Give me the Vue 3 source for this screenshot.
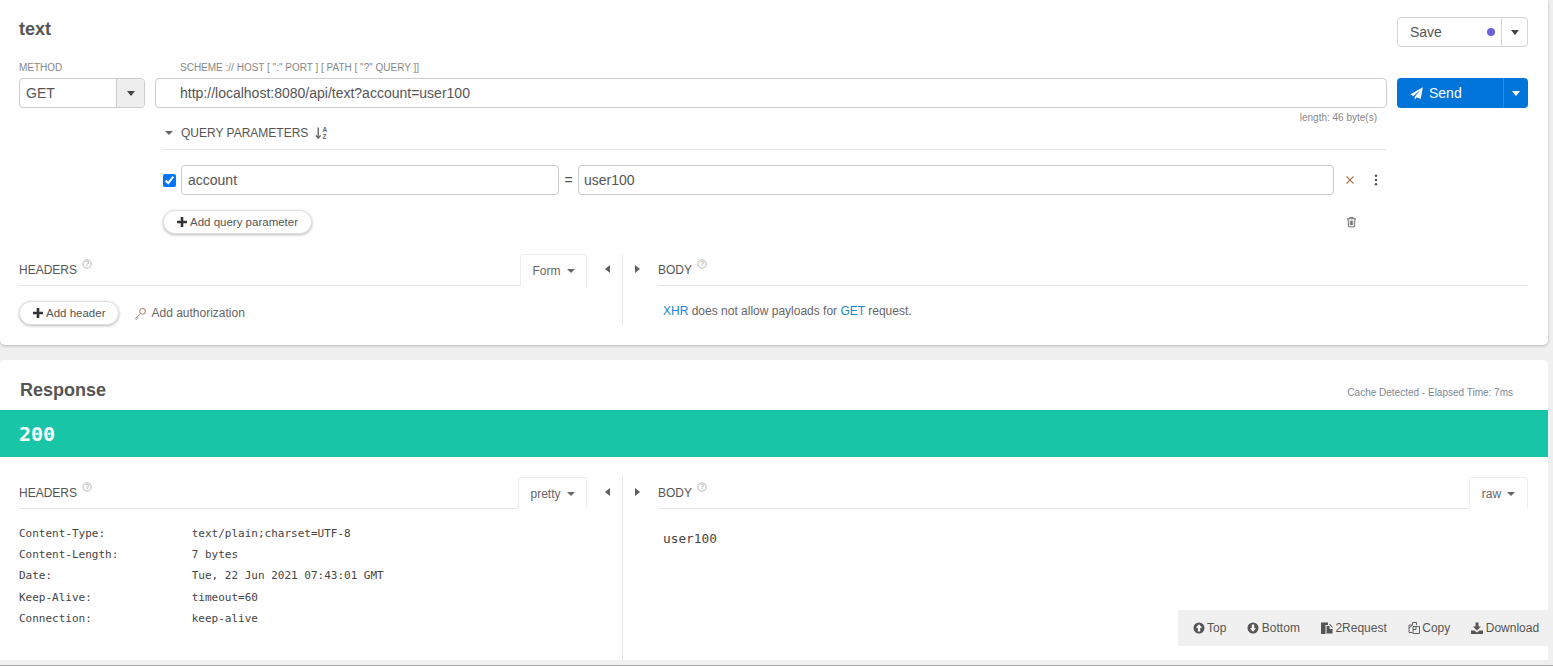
<script setup>
const headers = [
  ['Content-Type:', 'text/plain;charset=UTF-8'],
  ['Content-Length:', '7 bytes'],
  ['Date:', 'Tue, 22 Jun 2021 07:43:01 GMT'],
  ['Keep-Alive:', 'timeout=60'],
  ['Connection:', 'keep-alive'],
]
</script>

<template>
  <div class="page">
    <section class="panel request">
      <div class="title-row">
        <h1 class="title">text</h1>
        <div class="save">
          <span class="save-main">Save<i class="dot"></i></span>
          <span class="save-arrow"><i class="caret dark"></i></span>
        </div>
      </div>

      <div class="fields">
        <div class="method-col">
          <label class="field-label">METHOD</label>
          <div class="method">
            <span class="method-value">GET</span>
            <span class="method-arrow"><i class="caret dark"></i></span>
          </div>
        </div>
        <div class="url-col">
          <label class="field-label url-label">SCHEME :// HOST [ ":" PORT ] [ PATH [ "?" QUERY ]]</label>
          <div class="url">http://localhost:8080/api/text?account=user100</div>
          <div class="length">length: 46 byte(s)</div>
        </div>
        <div class="send-col">
          <div class="send">
            <span class="send-main">
              <svg class="plane" viewBox="0 0 14 14"><path d="M13.8.2 11.6 12.8 7.3 11 5.1 13.6V10.6L11.6 2.8 3.8 9.6.2 8.1Z" fill="#fff"/></svg>
              Send
            </span>
            <span class="send-arrow"><i class="caret white"></i></span>
          </div>
        </div>
      </div>

      <div class="params">
        <div class="params-head">
          <i class="caret small"></i>
          <span>QUERY PARAMETERS</span>
          <svg class="sort" viewBox="0 0 14 14">
            <path d="M3.5 1V12M1 9.5 3.5 12.5 6 9.5" fill="none" stroke="#666" stroke-width="1.5"/>
            <text x="8" y="6" class="sort-letter">A</text>
            <text x="8" y="13" class="sort-letter">Z</text>
          </svg>
        </div>
        <div class="param-row">
          <input class="check" type="checkbox" checked />
          <div class="input name">account</div>
          <span class="equals">=</span>
          <div class="input value">user100</div>
          <svg class="remove" viewBox="0 0 10 10"><path d="M1.5 1.5 8.5 8.5M8.5 1.5 1.5 8.5" stroke="#a5764f" stroke-width="1.1" fill="none"/></svg>
          <svg class="more" viewBox="0 0 4 12"><circle cx="2" cy="1.7" r="1.3"/><circle cx="2" cy="6" r="1.3"/><circle cx="2" cy="10.3" r="1.3"/></svg>
        </div>
        <div class="add-row">
          <button class="pill">
            <svg class="plus" viewBox="0 0 10 10"><path d="M5 0V10M0 5H10" stroke="#333" stroke-width="2.6"/></svg>Add query parameter
          </button>
          <svg class="trash" viewBox="0 0 12 12">
            <path d="M1 2.5H11M4.2 2.5V1H7.8V2.5M2.2 2.5 2.8 11.3H9.2L9.8 2.5M4.6 4.5V9.5M6 4.5V9.5M7.4 4.5V9.5" fill="none" stroke="#666" stroke-width="1"/>
          </svg>
        </div>
      </div>

      <div class="split">
        <div class="side">
          <div class="side-head">
            <span class="side-title">HEADERS<svg class="help" viewBox="0 0 12 12"><circle cx="6" cy="6" r="5" fill="none" stroke="#aaa"/><text x="6" y="8.8" class="help-mark">?</text></svg></span>
            <span class="tab form-tab">Form<i class="caret small"></i></span>
          </div>
          <div class="header-actions">
            <button class="pill">
              <svg class="plus" viewBox="0 0 10 10"><path d="M5 0V10M0 5H10" stroke="#333" stroke-width="2.6"/></svg>Add header
            </button>
            <span class="auth">
              <svg class="key" viewBox="0 0 14 14">
                <circle cx="9.2" cy="4.7" r="3" fill="none" stroke="#b08a70" stroke-width="1.1"/>
                <path d="M7 7 1.5 12.5M3.2 10.8 4.8 12.4M1.6 12.4 3 13.6" fill="none" stroke="#999" stroke-width="1.1"/>
              </svg>
              Add authorization
            </span>
          </div>
        </div>
        <div class="gutter">
          <i class="tri left"></i><i class="vline"></i><i class="tri right"></i>
        </div>
        <div class="side">
          <div class="side-head">
            <span class="side-title">BODY<svg class="help" viewBox="0 0 12 12"><circle cx="6" cy="6" r="5" fill="none" stroke="#aaa"/><text x="6" y="8.8" class="help-mark">?</text></svg></span>
          </div>
          <p class="xhr"><span class="link">XHR</span> does not allow payloads for <span class="link">GET</span> request.</p>
        </div>
      </div>
    </section>

    <section class="panel response">
      <div class="resp-title-row">
        <h2 class="resp-title">Response</h2>
        <span class="elapsed">Cache Detected - Elapsed Time: 7ms</span>
      </div>
      <div class="status">200</div>
      <div class="split resp-split">
        <div class="side">
          <div class="side-head">
            <span class="side-title">HEADERS<svg class="help" viewBox="0 0 12 12"><circle cx="6" cy="6" r="5" fill="none" stroke="#aaa"/><text x="6" y="8.8" class="help-mark">?</text></svg></span>
            <span class="tab pretty-tab">pretty<i class="caret small"></i></span>
          </div>
          <div class="hdr-list">
            <div v-for="h in headers" :key="h[0]" class="hdr-row">
              <span class="hdr-key">{{ h[0] }}</span><span>{{ h[1] }}</span>
            </div>
          </div>
        </div>
        <div class="gutter">
          <i class="tri left"></i><i class="vline"></i><i class="tri right"></i>
        </div>
        <div class="side">
          <div class="side-head">
            <span class="side-title">BODY<svg class="help" viewBox="0 0 12 12"><circle cx="6" cy="6" r="5" fill="none" stroke="#aaa"/><text x="6" y="8.8" class="help-mark">?</text></svg></span>
            <span class="tab raw-tab">raw<i class="caret small"></i></span>
          </div>
          <pre class="raw">user100</pre>
        </div>
      </div>

      <div class="toolbar">
        <span class="tool">
          <svg viewBox="0 0 12 12"><circle cx="6" cy="6" r="5.5" fill="#555"/><path d="M6 2.3 9.2 5.7H7.2V9.4H4.8V5.7H2.8Z" fill="#fff"/></svg>Top
        </span>
        <span class="tool">
          <svg viewBox="0 0 12 12"><circle cx="6" cy="6" r="5.5" fill="#555"/><path d="M6 9.7 9.2 6.3H7.2V2.6H4.8V6.3H2.8Z" fill="#fff"/></svg>Bottom
        </span>
        <span class="tool">
          <svg viewBox="0 0 12 12"><path d="M0 .5H7V3H4.5V12H0Z" fill="#555"/><path d="M5.5 4H8.5V7H11.5V11.5H5.5Z" fill="#555"/><path d="M8.5 2 11.5 5.5" stroke="#555" fill="none"/></svg>2Request
        </span>
        <span class="tool">
          <svg viewBox="0 0 12 12"><path d="M4.5.5H8.5V3M4.5.5V3H1V10.5H4.5M4.5 3 1 6M5 4.5H11.5V11.5H5ZM8 4.5V7.5H5" fill="none" stroke="#555" stroke-width=".9"/></svg>Copy
        </span>
        <span class="tool">
          <svg viewBox="0 0 12 12"><path d="M4.5.5H7.5V4.5H10L6 8.5 2 4.5H4.5Z" fill="#555"/><path d="M0 8.5H3.5L6 10.5 8.5 8.5H12V12H0Z" fill="#555"/></svg>Download
        </span>
      </div>
    </section>
  </div>
</template>

<style>
html, body { margin: 0; background: #f0f0f0; }
</style>

<style scoped>
.page {
  position: relative;
  box-sizing: border-box;
  width: 1553px;
  height: 666px;
  overflow: hidden;
  background: #f0f0f0;
  border-bottom: 1px solid #a8a8a8;
  font-family: "Liberation Sans", Arial, sans-serif;
  color: #555;
  font-size: 12px;
}
.panel { width: 1548px; background: #fff; box-sizing: border-box; }
.request {
  height: 345px;
  padding: 17px 0 0 19px;
  border-radius: 0 0 5px 5px;
  box-shadow: 0 1px 3px rgba(0, 0, 0, .25);
}
.title-row { display: flex; justify-content: space-between; width: 1509px; height: 30px; }
.title { margin: 0; font-size: 18px; line-height: 24px; font-weight: 700; color: #555; }
.save {
  box-sizing: border-box; width: 131px; height: 30px; display: flex;
  border: 1px solid #d4d4d4; border-radius: 4px;
  font-size: 14px; line-height: 28px;
}
.save-main { flex: 1; display: flex; justify-content: space-between; align-items: center; padding: 0 6px 0 12px; }
.dot { width: 8px; height: 8px; border-radius: 50%; background: #6a62d2; }
.save-arrow { width: 25px; border-left: 1px solid #d4d4d4; display: flex; align-items: center; justify-content: center; }

.caret { display: inline-block; width: 0; height: 0; border-style: solid; border-width: 5px 4.5px 0; border-color: #555 transparent transparent; }
.caret.dark { border-top-color: #444; }
.caret.white { border-top-color: #fff; }
.caret.small { border-width: 4px 4px 0; border-top-color: #666; }

.fields { display: flex; gap: 10px; height: 78px; }
.method-col { width: 126px; padding-top: 14px; box-sizing: border-box; }
.url-col { width: 1232px; padding-top: 14px; box-sizing: border-box; }
.send-col { width: 131px; padding-top: 31px; box-sizing: border-box; }
.field-label { display: block; height: 17px; font-size: 10px; line-height: 13px; color: #888; }
.url-label { padding-left: 25px; }
.method {
  box-sizing: border-box; height: 30px; display: flex;
  border: 1px solid #ccc; border-radius: 4px; font-size: 14px; line-height: 28px;
}
.method-value { flex: 1; padding-left: 6px; }
.method-arrow { width: 27px; background: #eee; border-left: 1px solid #ccc; border-radius: 0 3px 3px 0; display: flex; align-items: center; justify-content: center; }
.url {
  box-sizing: border-box; height: 30px; padding-left: 24px;
  border: 1px solid #ccc; border-radius: 4px; font-size: 14px; line-height: 28px;
}
.length { text-align: right; padding-right: 10px; font-size: 10px; line-height: 20px; color: #888; }
.send {
  height: 30px; display: flex; background: #0074d9; color: #fff; border-radius: 4px;
  font-size: 14px; line-height: 30px;
}
.send-main { flex: 1; display: flex; align-items: center; gap: 6px; padding-left: 13px; }
.plane { width: 13px; height: 13px; }
.send-arrow { width: 24px; border-left: 1px solid #2c8ade; display: flex; align-items: center; justify-content: center; }

.params { margin-left: 144px; width: 1223px; }
.params-head {
  box-sizing: border-box; height: 25px; display: flex; align-items: flex-start; padding: 1px 0 0 2px;
  border-bottom: 1px solid #e6e6e6; line-height: 14px; color: #555;
}
.params-head .caret { margin: 5px 8px 0 0; }
.sort { width: 13px; height: 14px; margin-left: 7px; }
.sort-letter { font-size: 7px; fill: #666; font-family: "Liberation Sans", sans-serif; font-weight: 700; }
.param-row { display: flex; align-items: center; margin-top: 15px; height: 30px; position: relative; }
.check { width: 13px; height: 13px; margin: 0 5px 0 0; accent-color: #0075ff; }
.input {
  box-sizing: border-box; height: 30px; padding-left: 6px;
  border: 1px solid #ccc; border-radius: 4px; font-size: 14px; line-height: 28px;
}
.name { width: 378px; }
.equals { width: 19px; text-align: center; font-size: 14px; }
.value { width: 756px; padding-left: 5px; }
.remove { width: 10px; height: 10px; margin-left: 11px; }
.more { width: 4px; height: 12px; margin-left: 19px; fill: #555; }
.add-row { display: flex; justify-content: space-between; align-items: center; margin-top: 15px; height: 24px; padding-right: 29px; }
.trash { width: 11px; height: 12px; }
.pill {
  box-sizing: border-box; height: 24px; padding: 0 13px; background: #fff; border: 1px solid #e0e0e0;
  display: inline-flex; align-items: center;
  border-radius: 12px; box-shadow: 0 1px 3px rgba(0,0,0,.28); font: 11.5px/20px "Liberation Sans", Arial, sans-serif; color: #555;
}
.plus { width: 10px; height: 10px; margin-right: 3px; }

.split { display: grid; grid-template-columns: 568px 71px 870px; margin-top: 20px; }
.side-head {
  box-sizing: border-box; height: 32px; position: relative;
  border-bottom: 1px solid #e6e6e6; line-height: 32px;
}
.side-title { color: #555; display: inline-flex; align-items: flex-start; }
.help { width: 10px; height: 10px; margin: 5px 0 0 5px; }
.help-mark { font-size: 9px; fill: #999; text-anchor: middle; font-family: "Liberation Sans", sans-serif; }
.tab {
  position: absolute; right: 0; top: 0; box-sizing: border-box; height: 32px;
  border: 1px solid #eee; border-bottom: 0; border-radius: 3px 3px 0 0;
  display: flex; align-items: center; justify-content: center; gap: 6px; color: #666; background: #fff;
}
.form-tab { width: 67px; }
.pretty-tab { width: 69px; }
.raw-tab { width: 59px; }
.header-actions { display: flex; align-items: center; margin-top: 15px; }
.auth { display: inline-flex; align-items: center; gap: 4px; margin-left: 15px; color: #666; }
.key { width: 13px; height: 13px; }
.gutter { position: relative; display: flex; align-items: flex-start; justify-content: flex-start; }
.vline { position: absolute; left: 35px; top: 0; bottom: 0; width: 1px; background: #e6e6e6; }
.tri { position: absolute; top: 11px; width: 0; height: 0; border-style: solid; }
.tri.left { left: 18px; border-width: 4.5px 5px 4.5px 0; border-color: transparent #5f5f5f transparent transparent; }
.tri.right { left: 48px; border-width: 4.5px 0 4.5px 5px; border-color: transparent transparent transparent #5f5f5f; }
.xhr { margin: 18px 0 0 5px; line-height: 15px; color: #666; }
.link { color: #1a87d0; }

.response {
  position: relative; height: 300px; margin-top: 15px; border-radius: 5px 5px 0 0;
}
.resp-title-row { height: 50px; display: flex; justify-content: space-between; align-items: flex-start; padding: 18px 35px 0 20px; box-sizing: border-box; }
.resp-title { margin: 0; font-size: 18px; line-height: 24px; font-weight: 700; color: #555; }
.elapsed { font-size: 10px; line-height: 14px; color: #7c8894; margin-top: 8px; }
.status {
  height: 47px; background: #18c5a6; color: #fff; padding-left: 19px; font: 700 20px/48px "DejaVu Sans Mono", monospace;
}
.resp-split { margin: 20px 0 0 19px; height: 183px; }
.hdr-list { margin-top: 13.8px; font: 11px/21.3px "DejaVu Sans Mono", monospace; color: #444; }
.hdr-row { display: flex; }
.hdr-key { width: 172.7px; }
.raw { margin: 20px 0 0 5px; font: 12.8px/20px "DejaVu Sans Mono", monospace; color: #444; }
.toolbar {
  position: absolute; left: 1178px; top: 250px; width: 375px; height: 36px; box-sizing: border-box; background: #f0f0f0;
  display: flex; align-items: center; gap: 21px; padding-left: 14.5px; color: #555;
}
.tool { display: inline-flex; align-items: center; gap: 2.5px; white-space: nowrap; }
.tool svg { width: 12px; height: 12px; }
</style>
